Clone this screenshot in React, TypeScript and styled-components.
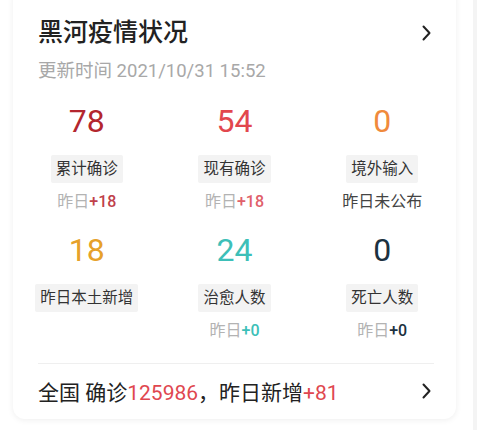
import React from 'react';
import styled, { createGlobalStyle } from 'styled-components';

const GlobalStyle = createGlobalStyle`
  html, body {
    margin: 0;
    padding: 0;
    background: #ffffff;
  }
  body {
    font-family: Roboto, "Noto Sans CJK SC", sans-serif;
  }
`;

const Page = styled.div`
  width: 477px;
  height: 430px;
  overflow: hidden;
  position: relative;
  background: #fff;
`;

const SideLine = styled.div`
  position: absolute;
  top: 0;
  right: 0;
  width: 4px;
  height: 100%;
  background: #f4f4f4;
`;

const Card = styled.div`
  width: 443px;
  margin: -12px 0 0 13px;
  padding-top: 12px;
  height: 431px;
  box-sizing: border-box;
  background: #fff;
  border-radius: 12px;
  box-shadow: 0 1px 6px rgba(0, 0, 0, 0.07);
  display: flex;
  flex-direction: column;
`;

const Header = styled.div`
  display: flex;
  align-items: center;
  justify-content: space-between;
  padding: 15px 23px 0 25px;
`;

const Title = styled.h1`
  margin: 0;
  font-size: 25px;
  font-weight: 500;
  color: #222;
  line-height: 36px;
`;

const Updated = styled.div`
  padding: 8px 25px 0;
  font-size: 18.5px;
  color: #a8a8a8;
  line-height: 24px;
`;

const Grid = styled.div`
  display: grid;
  grid-template-columns: repeat(3, 1fr);
  margin-top: 20px;
`;

const Stat = styled.div`
  display: flex;
  flex-direction: column;
  align-items: center;
  height: 129px;
`;

const Value = styled.div<{ $color: string }>`
  font-size: 32px;
  line-height: 36px;
  color: ${p => p.$color};
`;

const Label = styled.div`
  margin-top: 16px;
  background: #f3f3f3;
  border-radius: 2px;
  padding: 0 5px;
  font-size: 15.5px;
  line-height: 28px;
  color: #333;
`;

const Delta = styled.div<{ $muted?: boolean }>`
  margin-top: 8px;
  font-size: 16px;
  line-height: 22px;
  color: ${p => (p.$muted ? '#444' : '#b3b3b3')};
`;

const DeltaNum = styled.span<{ $color: string }>`
  color: ${p => p.$color};
  font-weight: 500;
`;

const Divider = styled.div`
  margin: 2px 22px 0 25px;
  height: 1px;
  background: #efefef;
`;

const Footer = styled.div`
  display: flex;
  align-items: center;
  justify-content: space-between;
  padding: 0 23px 0 25px;
  height: 54px;
`;

const FooterText = styled.div`
  font-size: 21px;
  color: #222;
`;

const Red = styled.span`
  color: #e0474f;
`;

const Chevron = () => (
  <svg width="12" height="16" viewBox="0 0 12 16" fill="none">
    <path d="M2.5 1.5 L8.5 8 L2.5 14.5" stroke="#222" strokeWidth="2" strokeLinecap="round" strokeLinejoin="round" />
  </svg>
);

type Item = {
  value: string;
  color: string;
  label: string;
  delta?: string;
  deltaColor?: string;
  muted?: string;
};

const items: Item[] = [
  { value: '78', color: '#b3262e', label: '累计确诊', delta: '+18', deltaColor: '#c0404a' },
  { value: '54', color: '#e2474e', label: '现有确诊', delta: '+18', deltaColor: '#e0606a' },
  { value: '0', color: '#f08a3c', label: '境外输入', muted: '昨日未公布' },
  { value: '18', color: '#e6a12a', label: '昨日本土新增' },
  { value: '24', color: '#3dbfb8', label: '治愈人数', delta: '+0', deltaColor: '#3dbfb8' },
  { value: '0', color: '#1c3140', label: '死亡人数', delta: '+0', deltaColor: '#1c3140' },
];

export default function App() {
  return (
    <Page>
      <GlobalStyle />
      <SideLine />
      <Card>
        <Header>
          <Title>黑河疫情状况</Title>
          <Chevron />
        </Header>
        <Updated>更新时间 2021/10/31 15:52</Updated>
        <Grid>
          {items.map((it, i) => (
            <Stat key={i}>
              <Value $color={it.color}>{it.value}</Value>
              <Label>{it.label}</Label>
              {it.muted && <Delta $muted>{it.muted}</Delta>}
              {it.delta && (
                <Delta>
                  昨日<DeltaNum $color={it.deltaColor!}>{it.delta}</DeltaNum>
                </Delta>
              )}
            </Stat>
          ))}
        </Grid>
        <Divider />
        <Footer>
          <FooterText>
            全国 确诊<Red>125986</Red>，昨日新增<Red>+81</Red>
          </FooterText>
          <Chevron />
        </Footer>
      </Card>
    </Page>
  );
}
